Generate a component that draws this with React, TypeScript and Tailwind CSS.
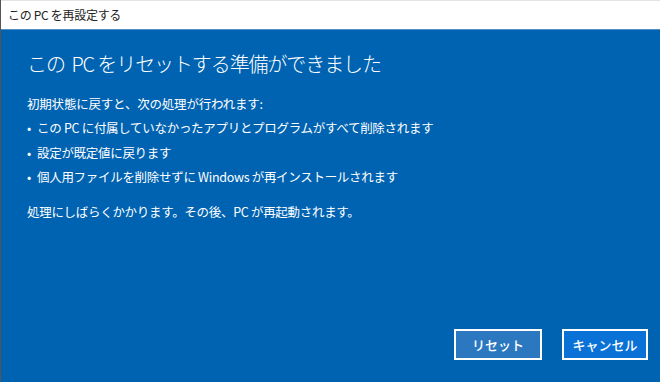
const FONT = { fontFamily: '"Noto Sans CJK JP", "Noto Sans", sans-serif' };

const items = [
  'この PC に付属していなかったアプリとプログラムがすべて削除されます',
  '設定が既定値に戻ります',
  '個人用ファイルを削除せずに Windows が再インストールされます',
];

export default function App() {
  return (
    <div className="w-[660px] h-[382px] flex flex-col bg-white border-l border-[#555]" style={FONT}>
      <div className="h-[29px] flex items-center border-t border-[#e3e3e3] pl-[7px] text-[12px] text-[#222] tracking-[-0.3px]">
        この PC を再設定する
      </div>
      <div className="flex-1 flex flex-col bg-[#0063b1] border-t border-[#4f8fc7] text-white">
        <div className="pl-[26px] pt-[18px]">
          <h1 className="text-[20px] font-light leading-[32px] tracking-[-1.1px]">
            この&nbsp;&nbsp;PC をリセットする準備ができました
          </h1>
          <p className="mt-[12px] text-[12.5px] leading-[24px] tracking-[-0.2px]">初期状態に戻すと、次の処理が行われます:</p>
          <ul className="text-[12.5px] leading-[24.5px] tracking-[-0.3px]">
            {items.map((t) => (
              <li key={t} className="flex">
                <span className="w-[10px]">•</span>
                <span>{t}</span>
              </li>
            ))}
          </ul>
          <p className="mt-[10px] text-[12.5px] leading-[24px] tracking-[-0.3px]">
            処理にしばらくかかります。その後、PC が再起動されます。
          </p>
        </div>
        <div className="mt-auto mb-[22px] flex justify-end gap-[20px] pr-[12px]">
          <button className="w-[88px] h-[31px] border-2 border-white bg-[#2c78c0] text-[13px] font-medium">
            リセット
          </button>
          <button className="w-[86px] h-[31px] border-2 border-white bg-[#0a72d6] text-[13px] font-medium">
            キャンセル
          </button>
        </div>
      </div>
    </div>
  );
}
